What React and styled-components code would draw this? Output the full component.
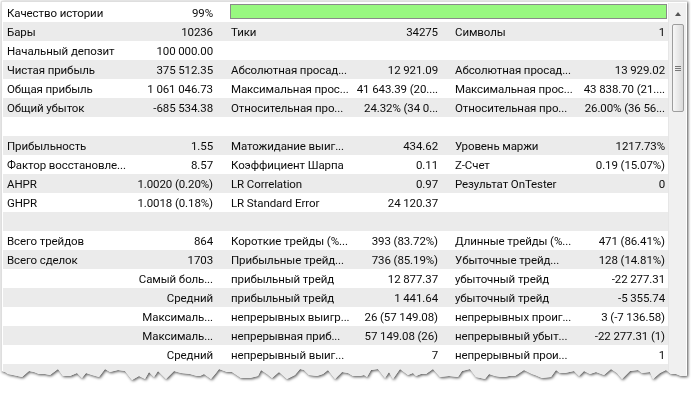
import React from "react";
import styled, { createGlobalStyle } from "styled-components";

const GlobalStyle = createGlobalStyle`
  html, body { margin: 0; padding: 0; background: #ffffff; }
  body { font-family: Roboto, "Noto Sans", sans-serif; }
`;

function tornEdge() {
  const pts = [];
  const W = 690;
  let x = 0;
  let i = 0;
  while (x < W) {
    const r = Math.abs(Math.sin(i * 12.9898 + 78.233) * 43758.5453) % 1;
    const r2 = Math.abs(Math.sin(i * 4.1414 + 3.7) * 9123.77) % 1;
    const y = 368 + Math.round(r * 11);
    pts.push(`${x}px ${y}px`);
    x += 3 + Math.round(r2 * 6);
    i += 1;
  }
  pts.push(`${W}px 374px`);
  return `polygon(0 0, ${W}px 0, ${pts.reverse().join(", ")})`;
}
const CLIP = tornEdge();

const Shadow = styled.div`
  width: 686px;
  padding: 1px 0 0 1px;
  filter: drop-shadow(1.5px 1.5px 1.8px rgba(0, 0, 0, 0.7));
`;

const Panel = styled.div`
  display: flex;
  height: 386px;
  background: #ffffff;
  border-top: 1px solid #dedede;
  border-left: 1px solid #dedede;
  box-sizing: border-box;
  padding: 1px 0 0 1px;
  clip-path: ${CLIP};
  font-family: Roboto, "Noto Sans", sans-serif;
  font-size: 11.5px;
  letter-spacing: -0.1px;
  color: #0c0c0c;
`;

const Table = styled.div`
  width: 665px;
  display: flex;
  flex-direction: column;
`;

const Row = styled.div`
  display: grid;
  grid-template-columns: 127px 97px 124px 100px 124px 93px;
  height: 19px;
  align-items: center;
  background: ${(p) => (p.$shade ? "#ebebeb" : "#ffffff")};
`;

const Label = styled.div`
  padding-left: 4px;
  white-space: nowrap;
  overflow: hidden;
`;

const Value = styled.div`
  text-align: right;
  white-space: nowrap;
  overflow: hidden;
  padding-right: ${(p) => p.$pr}px;
`;

const BarCell = styled.div`
  grid-column: 3 / 7;
  align-self: start;
  padding: 1px 1px 0 3px;
`;

const Bar = styled.div`
  height: 13px;
  border: 1px solid #8a8a8a;
  background: #98f880;
`;

const Scroll = styled.div`
  width: 18px;
  display: flex;
  flex-direction: column;
  align-items: center;
  background: #f0f0f0;
  border-left: 1px solid #e6e6e6;
  box-sizing: border-box;
`;

const ArrowBtn = styled.div`
  height: 19px;
  width: 100%;
  display: flex;
  align-items: center;
  justify-content: center;
`;

const Arrow = styled.div`
  width: 0;
  height: 0;
  border-left: 3.5px solid transparent;
  border-right: 3.5px solid transparent;
  border-bottom: 4px solid #555;
  margin-top: 2px;
`;

const Thumb = styled.div`
  width: 12px;
  height: 88px;
  margin-top: 2px;
  box-sizing: border-box;
  border: 1px solid #9d9d9d;
  border-radius: 2px;
  background: linear-gradient(to right, #f7f7f7, #e6e6e6 60%, #d9d9d9);
  display: flex;
  flex-direction: column;
  align-items: center;
  justify-content: center;
  gap: 1px;
`;

const Grip = styled.div`
  width: 6px;
  height: 1px;
  background: #777;
`;

const PR = [14, 13, 3];

const rows = [
  null,
  ["Бары", "10236", "Тики", "34275", "Символы", "1"],
  ["Начальный депозит", "100 000.00", "", "", "", ""],
  ["Чистая прибыль", "375 512.35", "Абсолютная просад...", "12 921.09", "Абсолютная просад...", "13 929.02"],
  ["Общая прибыль", "1 061 046.73", "Максимальная прос...", "41 643.39 (20....", "Максимальная прос...", "43 838.70 (21...."],
  ["Общий убыток", "-685 534.38", "Относительная про...", "24.32% (34 0...", "Относительная про...", "26.00% (36 56..."],
  ["", "", "", "", "", ""],
  ["Прибыльность", "1.55", "Матожидание выиг...", "434.62", "Уровень маржи", "1217.73%"],
  ["Фактор восстановле...", "8.57", "Коэффициент Шарпа", "0.11", "Z-Счет", "0.19 (15.07%)"],
  ["AHPR", "1.0020 (0.20%)", "LR Correlation", "0.97", "Результат OnTester", "0"],
  ["GHPR", "1.0018 (0.18%)", "LR Standard Error", "24 120.37", "", ""],
  ["", "", "", "", "", ""],
  ["Всего трейдов", "864", "Короткие трейды (%...", "393 (83.72%)", "Длинные трейды (%...", "471 (86.41%)"],
  ["Всего сделок", "1703", "Прибыльные трейд...", "736 (85.19%)", "Убыточные трейд...", "128 (14.81%)"],
  ["", "Самый боль...", "прибыльный трейд", "12 877.37", "убыточный трейд", "-22 277.31"],
  ["", "Средний", "прибыльный трейд", "1 441.64", "убыточный трейд", "-5 355.74"],
  ["", "Максималь...", "непрерывных выигр...", "26 (57 149.08)", "непрерывных проиг...", "3 (-7 136.58)"],
  ["", "Максималь...", "непрерывная приб...", "57 149.08 (26)", "непрерывный убыт...", "-22 277.31 (1)"],
  ["", "Средний", "непрерывный выиг...", "7", "непрерывный прои...", "1"],
  ["", "", "", "", "", ""],
];

export default function App() {
  return (
    <>
      <GlobalStyle />
      <Shadow>
        <Panel>
          <Table>
            {rows.map((r, i) => (
              <Row key={i} $shade={i % 2 === 1}>
                {r === null ? (
                  <>
                    <Label>Качество истории</Label>
                    <Value $pr={PR[0]}>99%</Value>
                    <BarCell>
                      <Bar />
                    </BarCell>
                  </>
                ) : (
                  [0, 1, 2].map((g) => (
                    <React.Fragment key={g}>
                      <Label>{r[g * 2]}</Label>
                      <Value $pr={PR[g]}>{r[g * 2 + 1]}</Value>
                    </React.Fragment>
                  ))
                )}
              </Row>
            ))}
          </Table>
          <Scroll>
            <ArrowBtn>
              <Arrow />
            </ArrowBtn>
            <Thumb>
              <Grip />
              <Grip />
              <Grip />
            </Thumb>
          </Scroll>
        </Panel>
      </Shadow>
    </>
  );
}
